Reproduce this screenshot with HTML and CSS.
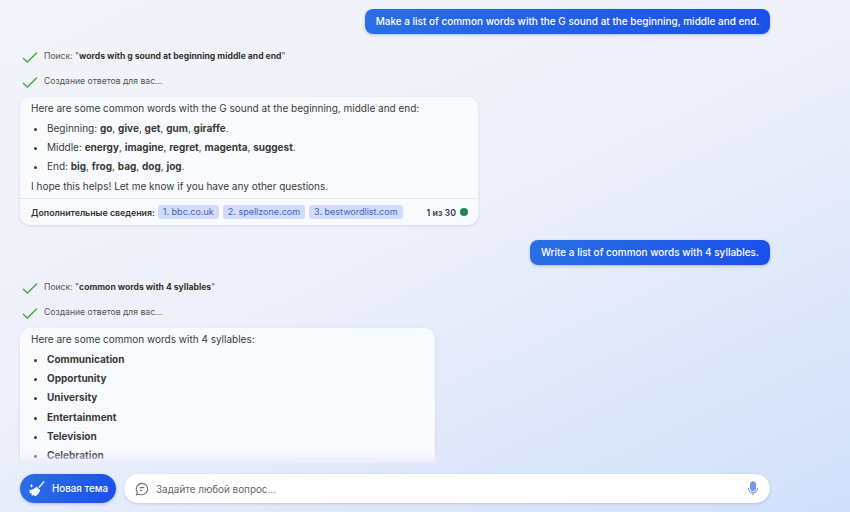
FILE: index.html
```html
<!DOCTYPE html>
<html lang="en">
<head>
    <meta charset="UTF-8">
    <title>Chat</title>
    <link rel="stylesheet" href="styles.css">
</head>
<body>
    <div class="page">
        <div class="chat">
            <div class="user-row"><div class="user-message">Make a list of common words with the G sound at the beginning, middle and end.</div></div>
            <div class="status status-first">
                <svg class="check" viewBox="0 0 16 12"><path d="M1 7l4.500 4L15 1.500"/></svg>
                <span>Поиск: "<b>words with g sound at beginning middle and end</b>"</span>
            </div>
            <div class="status">
                <svg class="check" viewBox="0 0 16 12"><path d="M1 7l4.500 4L15 1.500"/></svg>
                <span>Создание ответов для вас...</span>
            </div>
            <div class="card card-first">
                <div class="card-body">
                    <p>Here are some common words with the G sound at the beginning, middle and end:</p>
                    <ul>
                        <li>Beginning: <b>go</b>, <b>give</b>, <b>get</b>, <b>gum</b>, <b>giraffe</b>.</li>
                        <li>Middle: <b>energy</b>, <b>imagine</b>, <b>regret</b>, <b>magenta</b>, <b>suggest</b>.</li>
                        <li>End: <b>big</b>, <b>frog</b>, <b>bag</b>, <b>dog</b>, <b>jog</b>.</li>
                    </ul>
                    <p>I hope this helps! Let me know if you have any other questions.</p>
                </div>
                <div class="card-footer">
                    <span class="more-label">Дополнительные сведения:</span>
                    <a class="source">1. bbc.co.uk</a>
                    <a class="source">2. spellzone.com</a>
                    <a class="source">3. bestwordlist.com</a>
                    <span class="counter">1 из 30</span>
                    <span class="dot"></span>
                </div>
            </div>
            <div class="user-row user-row-second"><div class="user-message">Write a list of common words with 4 syllables.</div></div>
            <div class="status status-first">
                <svg class="check" viewBox="0 0 16 12"><path d="M1 7l4.500 4L15 1.500"/></svg>
                <span>Поиск: "<b>common words with 4 syllables</b>"</span>
            </div>
            <div class="status">
                <svg class="check" viewBox="0 0 16 12"><path d="M1 7l4.500 4L15 1.500"/></svg>
                <span>Создание ответов для вас...</span>
            </div>
            <div class="card card-second">
                <div class="card-body">
                    <p>Here are some common words with 4 syllables:</p>
                    <ul>
                        <li><b>Communication</b></li>
                        <li><b>Opportunity</b></li>
                        <li><b>University</b></li>
                        <li><b>Entertainment</b></li>
                        <li><b>Television</b></li>
                        <li><b>Celebration</b></li>
                    </ul>
                </div>
            </div>
            <div class="chat-fade"></div>
        </div>
        <div class="composer">
            <button class="new-topic">
                <svg class="broom" viewBox="0 0 20 20">
                    <path class="broom-stick" d="M18 1.500l-6 7"/>
                    <path class="broom-head" d="M10 8l3.500 3c-.5 3-3 5.500-6 7l-1.500-1.500-1 1-1.500-1.500 1-1.500-1.500.5-1.500-1.500 2-1.500-2 .5-.5-1c3-.5 6-1.500 8.500-4z"/>
                    <path class="broom-head" d="M4 4.500l.6 1.400 1.400.6-1.400.6L4 8.500l-.6-1.400L2 6.500l1.400-.6z"/>
                </svg>
                <span>Новая тема</span>
            </button>
            <div class="ask-box">
                <svg class="bubble" viewBox="0 0 16 16">
                    <path d="M8 1.500a6.500 6.500 0 1 1-2.800 12.400L1.800 14.600l.8-3A6.500 6.500 0 0 1 8 1.500z"/>
                    <path d="M5.500 6.500h5M5.500 9.500h3"/>
                </svg>
                <span class="placeholder">Задайте любой вопрос...</span>
                <svg class="mic" viewBox="0 0 14 18">
                    <rect x="4" y="1" width="6" height="10.500" rx="3"/>
                    <path d="M1.500 8.500a5.500 5.500 0 0 0 11 0M7 14v3"/>
                </svg>
            </div>
        </div>
    </div>
</body>
</html>
```

FILE: styles.css
```css
* {
    box-sizing: border-box;
}
body {
    margin: 0;
    font-family: Inter, "Noto Sans", sans-serif;
    font-size: 10px;
    color: #3a3a3a;
}
.page {
    width: 850px;
    height: 512px;
    display: flex;
    flex-direction: column;
    overflow: hidden;
    background: linear-gradient(155deg, #f3f4f9 0%, #eef0fa 45%, #d0e0fa 100%);
}
.chat {
    position: relative;
    height: 463px;
    overflow: hidden;
    padding: 9px 80px 0 20px;
}
/* only the answer card fades out, the page behind it stays clean */
.chat-fade {
    position: absolute;
    left: 18px;
    width: 420px;
    bottom: 0;
    height: 20px;
    background: linear-gradient(rgba(232,237,250,0) 45%, rgba(232,237,250,0.95));
}
.user-row {
    display: flex;
    justify-content: flex-end;
}
.user-row-second {
    margin: 15px 0 0.600px;
}
.user-message {
    height: 25px;
    line-height: 25px;
    padding: 0 10.500px;
    border-radius: 8px;
    color: #fff;
    font-size: 9.970px;
    font-weight: 500;
    background: linear-gradient(100deg, #2a6fe4, #1b50ea);
    box-shadow: 0 1px 3px rgba(30,70,200,0.3);
}
.user-row-second .user-message {
    padding: 0 11px;
}
.status {
    display: flex;
    align-items: center;
    margin-top: 10px;
    height: 15px;
    font-size: 8.600px;
    color: #555;
}
.status-first {
    margin-top: 14px;
}
.status b {
    color: #333;
}
.check {
    width: 16px;
    height: 12px;
    margin: 3px 6px 0 2px;
    fill: none;
    stroke: #3fae49;
    stroke-width: 1.500;
}
.card {
    margin-top: 9px;
    background: #f9fafd;
    border-radius: 10px;
    box-shadow: 0 1px 3px rgba(60,70,120,0.15);
}
.card-first {
    width: 458px;
}
.card-second {
    width: 415px;
}
.card-body {
    padding: 4px 11px 4.500px;
}
.card-body p {
    margin: 0;
    line-height: 15px;
}
.card-body ul {
    margin: 0;
    padding: 5px 0 0 16px;
}
.card-body li {
    line-height: 15px;
    margin-bottom: 4.200px;
}
.card-footer {
    display: flex;
    align-items: center;
    height: 27px;
    padding: 0 10px 0 11px;
    border-top: 1px solid #e6e8ee;
    font-size: 8.800px;
}
.more-label {
    font-weight: 600;
    margin-right: 3px;
    color: #333;
}
.source {
    height: 14px;
    line-height: 14px;
    padding: 0 5px;
    margin-right: 4px;
    border-radius: 3px;
    background: #d0dcf8;
    color: #3f63c9;
    font-size: 9px;
}
.counter {
    margin-left: auto;
    font-weight: 600;
}
.dot {
    width: 8px;
    height: 8px;
    margin-left: 4px;
    border-radius: 50%;
    background: #1e8a4a;
}
.composer {
    display: flex;
    align-items: flex-start;
    gap: 8px;
    height: 49px;
    padding: 11px 80px 0 20px;
}
.new-topic {
    display: flex;
    align-items: center;
    width: 96px;
    height: 29px;
    padding: 0 0 0 8px;
    border: none;
    border-radius: 15px;
    color: #fff;
    font-family: inherit;
    font-size: 9.800px;
    font-weight: 500;
    background: linear-gradient(100deg, #2a6fe4, #1b50ea);
    box-shadow: 0 1px 3px rgba(30,70,200,0.3);
}
.broom {
    width: 18px;
    height: 18px;
    margin-right: 6px;
}
.broom-stick {
    fill: none;
    stroke: #fff;
    stroke-width: 1.500;
}
.broom-head {
    fill: #fff;
}
.ask-box {
    flex: 1;
    display: flex;
    align-items: center;
    height: 29px;
    padding: 0 11px;
    border-radius: 15px;
    background: #fff;
    box-shadow: 0 1px 3px rgba(60,70,120,0.2);
}
.bubble {
    width: 14px;
    height: 14px;
    margin-right: 7px;
    fill: none;
    stroke: #777;
    stroke-width: 1.300;
}
.placeholder {
    flex: 1;
    font-size: 9.900px;
    color: #666;
}
.mic {
    width: 12px;
    height: 15px;
    fill: #7a96ee;
    stroke: #7a96ee;
    stroke-width: 1.300;
}
.mic path {
    fill: none;
}
```
